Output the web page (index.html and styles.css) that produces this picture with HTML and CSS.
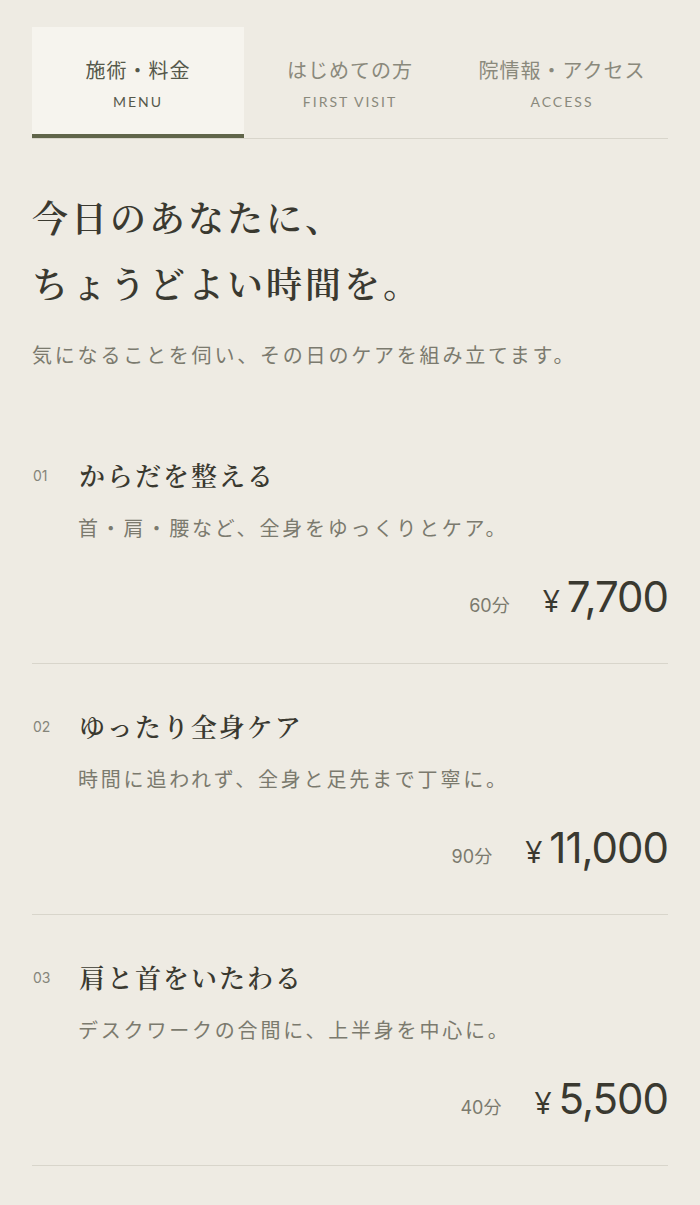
FILE: index.html
```html
<!DOCTYPE html>
<html lang="ja">
<head>
  <meta charset="utf-8">
  <title>施術・料金</title>
  <link rel="stylesheet" href="styles.css">
</head>
<body>
  <div class="page">
    <nav class="tabs">
      <a class="tab active" href="#menu">
        <span class="tab-ja">施術・料金</span>
        <span class="tab-en">MENU</span>
      </a>
      <a class="tab" href="#first">
        <span class="tab-ja">はじめての方</span>
        <span class="tab-en">FIRST VISIT</span>
      </a>
      <a class="tab" href="#access">
        <span class="tab-ja">院情報・アクセス</span>
        <span class="tab-en">ACCESS</span>
      </a>
    </nav>

    <section class="intro">
      <h1>今日のあなたに、<br>ちょうどよい時間を。</h1>
      <p class="lead">気になることを伺い、その日のケアを組み立てます。</p>
    </section>

    <ul class="menu-list">
      <li class="menu-item">
        <div class="item-head">
          <span class="item-no">01</span>
          <h2 class="item-title">からだを整える</h2>
        </div>
        <p class="item-desc">首・肩・腰など、全身をゆっくりとケア。</p>
        <div class="item-price">
          <span class="duration">60分</span>
          <span class="yen">¥</span>
          <span class="amount">7,700</span>
        </div>
      </li>
      <li class="menu-item">
        <div class="item-head">
          <span class="item-no">02</span>
          <h2 class="item-title">ゆったり全身ケア</h2>
        </div>
        <p class="item-desc">時間に追われず、全身と足先まで丁寧に。</p>
        <div class="item-price">
          <span class="duration">90分</span>
          <span class="yen">¥</span>
          <span class="amount">11,000</span>
        </div>
      </li>
      <li class="menu-item">
        <div class="item-head">
          <span class="item-no">03</span>
          <h2 class="item-title">肩と首をいたわる</h2>
        </div>
        <p class="item-desc">デスクワークの合間に、上半身を中心に。</p>
        <div class="item-price">
          <span class="duration">40分</span>
          <span class="yen">¥</span>
          <span class="amount">5,500</span>
        </div>
      </li>
    </ul>
  </div>
</body>
</html>
```

FILE: styles.css
```css
body {
  margin: 0;
  background: #eeebe3;
  color: #3a3930;
  font-family: "Noto Sans CJK JP", "Noto Sans", sans-serif;
}

.page {
  max-width: 636px;
  margin: 0 auto;
  padding-top: 27px;
}

/* Tabs */
.tabs {
  display: grid;
  grid-template-columns: repeat(3, 1fr);
  border-bottom: 1px solid #d8d5cb;
}

.tab {
  display: flex;
  flex-direction: column;
  align-items: center;
  padding: 28px 0 22px;
  border-bottom: 4px solid transparent;
  text-decoration: none;
  color: #8a897c;
}

.tab.active {
  background: #f6f4ee;
  border-bottom-color: #60654a;
  color: #55584a;
}

.tab-ja {
  font-size: 20px;
  line-height: 30px;
  letter-spacing: 1px;
}

.tab-en {
  margin-top: 7px;
  font-family: "Lato", "Inter", sans-serif;
  font-size: 14px;
  line-height: 20px;
  letter-spacing: 2px;
}

/* Intro */
.intro h1 {
  margin: 45px 0 0;
  font-family: "Noto Serif CJK JP", "Noto Sans CJK JP", serif;
  font-size: 36px;
  font-weight: 600;
  line-height: 66px;
  letter-spacing: 3px;
  color: #3a3930;
}

.lead {
  margin: 23px 0 0;
  font-size: 20px;
  line-height: 32px;
  letter-spacing: 0.14em;
  color: #7b7a6e;
}

/* Menu list */
.menu-list {
  list-style: none;
  margin: 42px 0 0;
  padding: 0;
}

.menu-item {
  padding: 42px 0 32px;
  border-bottom: 1px solid #d8d5cb;
}

.item-head {
  display: flex;
  align-items: center;
}

.item-no {
  width: 46px;
  flex-shrink: 0;
  padding-left: 1px;
  font-family: "Inter", sans-serif;
  font-size: 14px;
  color: #85857a;
}

.item-title {
  margin: 0;
  font-family: "Noto Serif CJK JP", "Noto Sans CJK JP", serif;
  font-size: 26px;
  font-weight: 600;
  line-height: 40px;
  letter-spacing: 2px;
  color: #3a3930;
}

.item-desc {
  margin: 17px 0 0 46px;
  font-size: 20px;
  line-height: 32px;
  letter-spacing: 0.14em;
  color: #7b7a6e;
}

.item-price {
  display: flex;
  justify-content: flex-end;
  align-items: baseline;
  margin-top: 28px;
  line-height: 50px;
}

.duration {
  margin-right: 33px;
  font-family: "Inter", "Noto Sans CJK JP", sans-serif;
  font-size: 18px;
  color: #7b7a6e;
}

.yen {
  margin-right: 7px;
  font-family: "Noto Sans", sans-serif;
  font-size: 30px;
  color: #3a3930;
}

.amount {
  font-family: "Inter", sans-serif;
  font-size: 42px;
  letter-spacing: -1px;
  color: #3a3930;
}
```
